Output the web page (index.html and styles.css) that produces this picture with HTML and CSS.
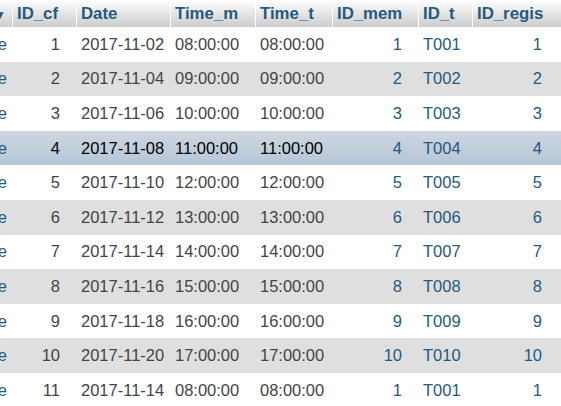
FILE: index.html
```html
<!DOCTYPE html>
<html>
<head>
<meta charset="utf-8">
<link rel="stylesheet" href="styles.css">
</head>
<body>
<div class="viewport">
<table class="data">
<thead>
<tr>
<th class="c0"><span class="arrow">▼</span></th>
<th class="c1">ID_cf</th>
<th class="c2">Date</th>
<th class="c3">Time_m</th>
<th class="c4">Time_t</th>
<th class="c5">ID_mem</th>
<th class="c6">ID_t</th>
<th class="c7">ID_regis</th>
</tr>
</thead>
<tbody>
<tr class="odd"><td class="act"><a>Delete</a></td><td class="num">1</td><td>2017-11-02</td><td>08:00:00</td><td>08:00:00</td><td class="num link">1</td><td class="link">T001</td><td class="num link">1</td></tr>
<tr class="even"><td class="act"><a>Delete</a></td><td class="num">2</td><td>2017-11-04</td><td>09:00:00</td><td>09:00:00</td><td class="num link">2</td><td class="link">T002</td><td class="num link">2</td></tr>
<tr class="odd"><td class="act"><a>Delete</a></td><td class="num">3</td><td>2017-11-06</td><td>10:00:00</td><td>10:00:00</td><td class="num link">3</td><td class="link">T003</td><td class="num link">3</td></tr>
<tr class="marked"><td class="act"><a>Delete</a></td><td class="num">4</td><td>2017-11-08</td><td>11:00:00</td><td>11:00:00</td><td class="num link">4</td><td class="link">T004</td><td class="num link">4</td></tr>
<tr class="odd"><td class="act"><a>Delete</a></td><td class="num">5</td><td>2017-11-10</td><td>12:00:00</td><td>12:00:00</td><td class="num link">5</td><td class="link">T005</td><td class="num link">5</td></tr>
<tr class="even"><td class="act"><a>Delete</a></td><td class="num">6</td><td>2017-11-12</td><td>13:00:00</td><td>13:00:00</td><td class="num link">6</td><td class="link">T006</td><td class="num link">6</td></tr>
<tr class="odd"><td class="act"><a>Delete</a></td><td class="num">7</td><td>2017-11-14</td><td>14:00:00</td><td>14:00:00</td><td class="num link">7</td><td class="link">T007</td><td class="num link">7</td></tr>
<tr class="even"><td class="act"><a>Delete</a></td><td class="num">8</td><td>2017-11-16</td><td>15:00:00</td><td>15:00:00</td><td class="num link">8</td><td class="link">T008</td><td class="num link">8</td></tr>
<tr class="odd"><td class="act"><a>Delete</a></td><td class="num">9</td><td>2017-11-18</td><td>16:00:00</td><td>16:00:00</td><td class="num link">9</td><td class="link">T009</td><td class="num link">9</td></tr>
<tr class="even"><td class="act"><a>Delete</a></td><td class="num">10</td><td>2017-11-20</td><td>17:00:00</td><td>17:00:00</td><td class="num link">10</td><td class="link">T010</td><td class="num link">10</td></tr>
<tr class="odd"><td class="act"><a>Delete</a></td><td class="num">11</td><td>2017-11-14</td><td>08:00:00</td><td>08:00:00</td><td class="num link">1</td><td class="link">T001</td><td class="num link">1</td></tr>
</tbody>
</table>
</div>
</body>
</html>
```
FILE: styles.css
```css
html, body {
  margin: 0;
  padding: 0;
  background: #fff;
  overflow: hidden;
}
.viewport {
  width: 561px;
  height: 406px;
  overflow: hidden;
}
.data {
  margin-left: -60px;
  border-collapse: separate;
  border-spacing: 0;
  table-layout: fixed;
  width: 633px;
  font-family: "Liberation Sans", Arial, sans-serif;
  font-size: 16.5px;
  color: #444;
}
.data th, .data td {
  box-sizing: border-box;
  white-space: nowrap;
  overflow: hidden;
  padding: 0 4px;
}
.data th {
  height: 27px;
  text-align: left;
  font-weight: bold;
  font-size: 16.8px;
  color: #235a81;
  background: linear-gradient(#ffffff, #cccccc);
  border-right: 1px solid #fff;
}
.data td {
  height: 34.6px;
  border-right: 1px solid transparent;
}
.c0 { width: 73px; text-align: right !important; }
.c1 { width: 64px; }
.c2 { width: 94px; }
.c3 { width: 85px; }
.c4 { width: 77px; }
.c5 { width: 86px; }
.c6 { width: 54px; }
.c7 { width: 100px; }
.arrow {
  font-size: 12px;
  display: inline-block;
  margin-right: 2px;
}
.data td.num { text-align: right; padding-right: 16px; }
.data td.act { text-align: right; padding-right: 5px; }
.data td.act a, .data td.link { color: #235a81; }
.data td:nth-child(8) { padding-right: 30px; }
tr.odd td { background: #fff; }
tr.even td { background: #dfdfdf; }
tr.marked td { background: linear-gradient(#ced6df, #b6c6d7); color: #000; }
tr.marked td.act a, tr.marked td.link { color: #235a81; }
```
